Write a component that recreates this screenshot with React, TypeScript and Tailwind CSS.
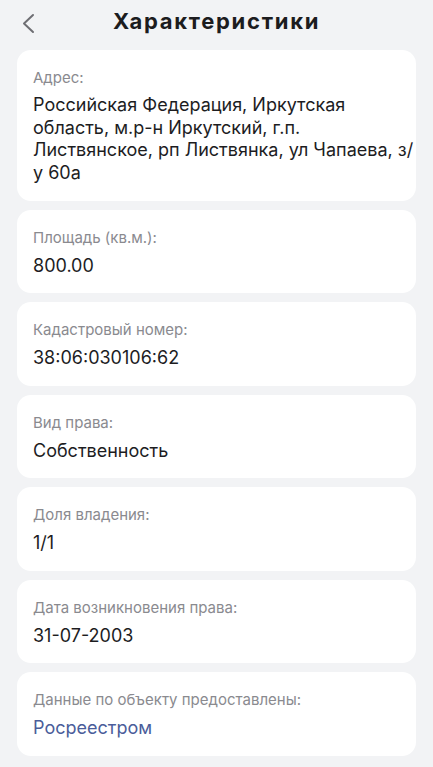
import React from "react";

const items: { label: string; value: string[]; link?: boolean }[] = [
  {
    label: "Адрес:",
    value: [
      "Российская Федерация, Иркутская",
      "область, м.р-н Иркутский, г.п.",
      "Листвянское, рп Листвянка, ул Чапаева, з/",
      "у 60а",
    ],
  },
  { label: "Площадь (кв.м.):", value: ["800.00"] },
  { label: "Кадастровый номер:", value: ["38:06:030106:62"] },
  { label: "Вид права:", value: ["Собственность"] },
  { label: "Доля владения:", value: ["1/1"] },
  { label: "Дата возникновения права:", value: ["31-07-2003"] },
  { label: "Данные по объекту предоставлены:", value: ["Росреестром"], link: true },
];

export default function App() {
  return (
    <div
      className="min-h-[767px] w-[433px] bg-[#f2f3f5] overflow-hidden"
      style={{ fontFamily: "Inter, 'Noto Sans', sans-serif" }}
    >
      <div className="relative h-[50px] pt-[7px] flex justify-center">
        <svg
          className="absolute left-[20px] top-[12px]"
          width="18"
          height="24"
          viewBox="0 0 18 24"
          fill="none"
        >
          <polyline
            points="13,3 4,11.5 13,20"
            stroke="#6e6e73"
            strokeWidth="2"
            strokeLinecap="round"
            strokeLinejoin="round"
          />
        </svg>
        <h1 className="text-[22px] leading-[28px] font-bold tracking-[1.7px] text-[#1c1c1e]">
          Характеристики
        </h1>
      </div>
      <div className="flex flex-col gap-[9px] px-[17px]">
        {items.map((it) => (
          <div key={it.label} className="bg-white rounded-[14px] pt-[18px] pb-[16.5px] px-[16px]">
            <div className="text-[15px] leading-[20px] text-[#8a8a8f]">{it.label}</div>
            <div
              className={
                "mt-[6px] text-[18px] leading-[23px] whitespace-nowrap " +
                (it.link ? "text-[#4a5d9a]" : "text-[#1d1d1f]")
              }
            >
              {it.value.map((line, i) => (
                <div key={i} className={it.value.length > 1 ? "leading-[22.5px]" : ""}>
                  {line}
                </div>
              ))}
            </div>
          </div>
        ))}
      </div>
    </div>
  );
}
